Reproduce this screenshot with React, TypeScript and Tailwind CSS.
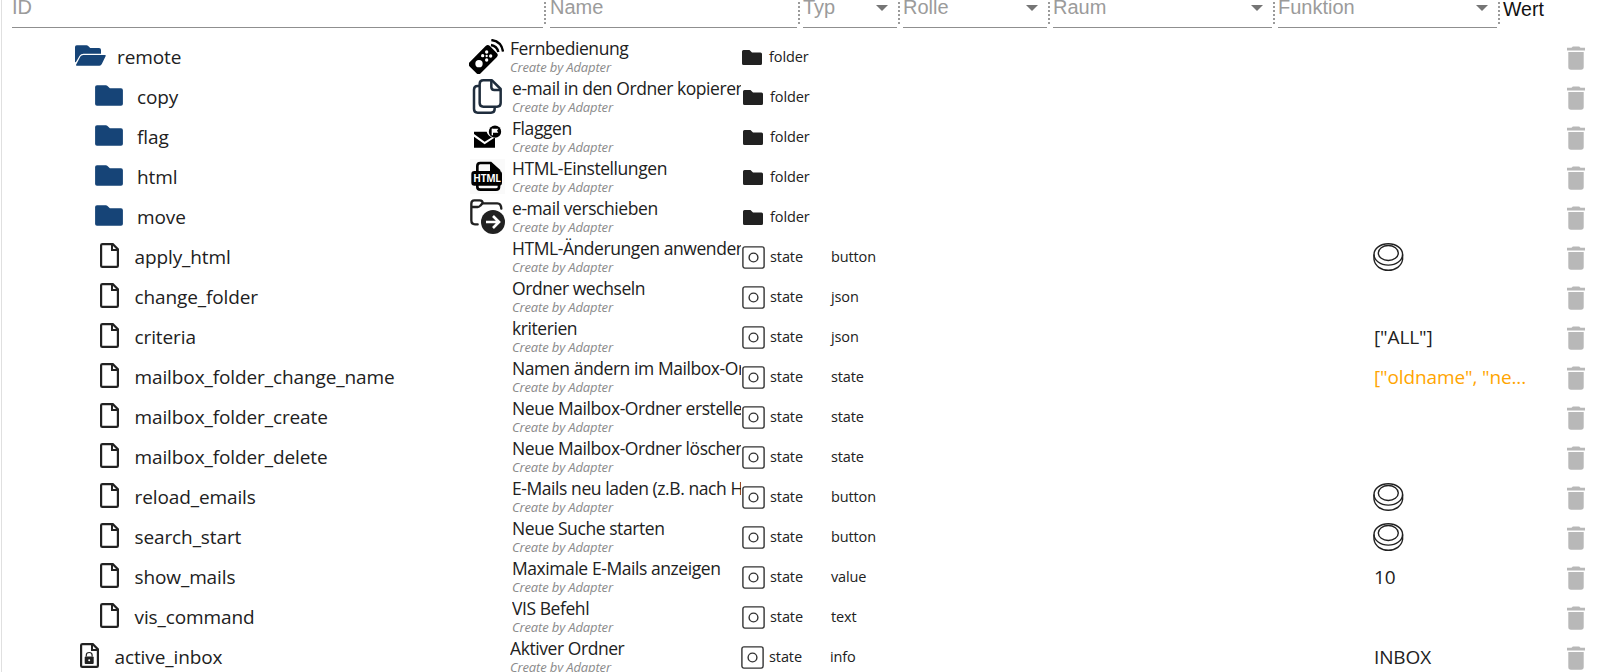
import React from "react";

type Kind = "folder" | "state";
type NameIcon = "remote" | "copy" | "flag" | "html" | "move";

interface Item {
  id: string;
  level: 0 | 1;
  kind: Kind;
  name: string;
  icon?: NameIcon;
  role?: string;
  value?: string;
  pending?: boolean;
  locked?: boolean;
}

const items: Item[] = [
  { id: "remote", level: 0, kind: "folder", name: "Fernbedienung", icon: "remote" },
  { id: "copy", level: 1, kind: "folder", name: "e-mail in den Ordner kopieren", icon: "copy" },
  { id: "flag", level: 1, kind: "folder", name: "Flaggen", icon: "flag" },
  { id: "html", level: 1, kind: "folder", name: "HTML-Einstellungen", icon: "html" },
  { id: "move", level: 1, kind: "folder", name: "e-mail verschieben", icon: "move" },
  { id: "apply_html", level: 1, kind: "state", name: "HTML-Änderungen anwenden", role: "button" },
  { id: "change_folder", level: 1, kind: "state", name: "Ordner wechseln", role: "json" },
  { id: "criteria", level: 1, kind: "state", name: "kriterien", role: "json", value: '["ALL"]' },
  { id: "mailbox_folder_change_name", level: 1, kind: "state", name: "Namen ändern im Mailbox-Or", role: "state", value: '["oldname", "ne...', pending: true },
  { id: "mailbox_folder_create", level: 1, kind: "state", name: "Neue Mailbox-Ordner erstellen", role: "state" },
  { id: "mailbox_folder_delete", level: 1, kind: "state", name: "Neue Mailbox-Ordner löschen", role: "state" },
  { id: "reload_emails", level: 1, kind: "state", name: "E-Mails neu laden (z.B. nach H", role: "button" },
  { id: "search_start", level: 1, kind: "state", name: "Neue Suche starten", role: "button" },
  { id: "show_mails", level: 1, kind: "state", name: "Maximale E-Mails anzeigen", role: "value", value: "10" },
  { id: "vis_command", level: 1, kind: "state", name: "VIS Befehl", role: "text" },
  { id: "active_inbox", level: 0, kind: "state", name: "Aktiver Ordner", role: "info", value: "INBOX", locked: true },
];

function OpenFolder() {
  return (
    <svg className="h-[21px] w-[31px] shrink-0" viewBox="0 0 31 21" fill="#164477">
      <path d="M0 17V2Q0 .3 1.7 .3H11.500Q12.500 .3 13.200 1L15.200 3.100H24Q26 3.100 26 5V8.800H8.500Q5.800 8.800 4.600 10.700L.8 17.300Z" />
      <path d="M8.300 10H30Q31.200 10 30.700 11L26.800 19Q26 20.700 24.500 20.700H1.800Q.6 20.700 1.200 19.600L5.400 11.600Q6.300 10 8.300 10Z" />
    </svg>
  );
}

function ClosedFolder() {
  return (
    <svg className="h-[21px] w-7 shrink-0" viewBox="0 0 28 21" fill="#164477">
      <path d="M2 .2H10.800Q11.800 .2 12.500 .9L14.900 3.300H26Q27.900 3.300 27.900 5.200V19Q27.900 20.800 26 20.800H2Q.1 20.800 .1 19V2Q.1 .2 2 .2Z" />
    </svg>
  );
}

function FileIcon({ locked }: { locked?: boolean }) {
  return (
    <svg className="h-[25px] w-[19px] shrink-0" viewBox="0 0 19 25" fill="none" stroke="#212121" strokeWidth="2.200">
      <path d="M2.500 1.100H12.800L17.900 6.200V22.700Q17.900 23.900 16.700 23.900H2.300Q1.100 23.900 1.100 22.700V2.300Q1.100 1.100 2.500 1.100Z" />
      <path d="M12 1V7H18" strokeWidth="2" />
      {locked && (
        <>
          <path d="M6.300 13.500V12Q6.300 9.500 9.200 9.500Q12.100 9.500 12.100 12V13.500" strokeWidth="1.200" />
          <rect x="4.700" y="13.500" width="9" height="7.500" rx="1" fill="#212121" stroke="none" />
          <circle cx="9.200" cy="17.200" r="1" fill="#fff" stroke="none" />
        </>
      )}
    </svg>
  );
}

function TypeIcon({ kind }: { kind: Kind }) {
  if (kind === "folder") {
    return (
      <svg className="ml-px mt-px h-[15px] w-5 shrink-0" viewBox="0 0 20 15" fill="#212121">
        <path d="M1.500 0H7.500L10 2.500H18.500Q20 2.500 20 4V13.500Q20 15 18.500 15H1.500Q0 15 0 13.500V1.500Q0 0 1.500 0Z" />
      </svg>
    );
  }
  return (
    <svg className="h-[23px] w-[23px] shrink-0" viewBox="0 0 23 23" fill="none" stroke="#333">
      <rect x=".9" y=".9" width="21.200" height="21.200" rx="2" strokeWidth="1.400" />
      <circle cx="11.500" cy="11.500" r="4.400" strokeWidth="1.400" />
    </svg>
  );
}

function NameGlyph({ icon }: { icon: NameIcon }) {
  if (icon === "remote") {
    return (
      <svg className="h-[35px] w-[35px]" viewBox="0 0 105 105">
        <rect x="19" y="19" width="47" height="86" rx="9" transform="rotate(45 42.500 62)" />
        <circle cx="30" cy="74" r="11" fill="#fff" />
        <g fill="#fff">
          <circle cx="53" cy="39" r="5" />
          <circle cx="41" cy="50" r="5" />
          <circle cx="53" cy="51" r="3.500" />
          <circle cx="65" cy="51" r="5" />
          <circle cx="53" cy="63" r="5" />
        </g>
        <g fill="none" stroke="#000" strokeWidth="7">
          <path d="M67 3Q98 7 102 38" />
          <path d="M66 18Q84 21 88 39" />
        </g>
      </svg>
    );
  }
  if (icon === "copy") {
    return (
      <svg className="h-[35px] w-[35px]" viewBox="0 0 105 105" fill="none" stroke="#1f2d3d" strokeWidth="7.500" strokeLinejoin="round">
        <path d="M40 4H66L92 30V72Q92 83 81 83H40Q29 83 29 72V15Q29 4 40 4Z" />
        <path d="M64 5V24Q64 33 73 33H91" />
        <path d="M29 21H23Q12 21 12 32V90Q12 101 23 101H63Q74 101 74 90V83" />
      </svg>
    );
  }
  if (icon === "flag") {
    return (
      <svg className="h-[35px] w-[35px]" viewBox="0 0 105 105">
        <path d="M12 38H50Q54 51 66 55L44 68L12 45Z" />
        <path d="M12 53L44 76L72 57H75V86H12Z" />
        <circle cx="75" cy="38" r="18.500" />
        <path d="M67 29V49" stroke="#fff" strokeWidth="4" />
        <path d="M67 29H85L81 35L85 41H67Z" fill="#fff" />
      </svg>
    );
  }
  if (icon === "html") {
    return (
      <span className="relative block h-[35px] w-[35px] bg-[#fafafa]">
        <svg className="h-[35px] w-[35px]" viewBox="0 0 105 105">
          <path d="M22 36V21Q22 12 31 12H62L87 35V42" fill="none" stroke="#000" strokeWidth="8" />
          <path d="M60 10L89 36H60Z" />
          <path d="M22 78V84Q22 92 31 92H78Q87 92 87 84V78" fill="none" stroke="#000" strokeWidth="8" />
          <rect x="4" y="36" width="92" height="44" rx="9" />
        </svg>
        <span className="absolute left-[2px] top-[13px] w-[30px] text-center font-['Open_Sans',sans-serif] text-[10px] font-bold leading-[13px] tracking-[-0.300px] text-white">
          HTML
        </span>
      </span>
    );
  }
  return (
    <svg className="h-[35px] w-[35px]" viewBox="0 0 105 105" fill="none" stroke="#212121" strokeWidth="7" strokeLinecap="round">
      <path d="M23 76H15Q4 76 4 64V14Q4 4 13 4H29Q38 4 38 12L31 20Q28 24 23 24H5" />
      <path d="M39 13H82Q93 13 94 29" />
      <circle cx="69" cy="69" r="36" fill="#212121" stroke="none" />
      <path d="M48 69H86M69 51L87 69L69 87" stroke="#fff" strokeWidth="8" strokeLinecap="butt" />
    </svg>
  );
}

function PushButton() {
  return (
    <svg className="-ml-px mt-[-1px] h-7 w-[31px]" viewBox="0 0 31 28" fill="none" stroke="#212121" strokeWidth="1.400">
      <ellipse cx="15.300" cy="11.400" rx="14.300" ry="10.700" />
      <ellipse cx="15.300" cy="10" rx="10" ry="7.500" />
      <path d="M1 11.500V16.500C2 23 8 27.300 15.300 27.300S28.600 23 29.600 16.500V11.500" />
    </svg>
  );
}

function TrashIcon() {
  return (
    <svg className="h-6 w-[18px]" viewBox="0 0 18 24" fill="#b8b8b8">
      <path d="M0 1.800H4.500L5.800 .5H12.200L13.500 1.800H18V4.500H0Z" />
      <path d="M1.300 6H16.700V21Q16.700 23.700 14 23.700H4Q1.300 23.700 1.300 21Z" />
    </svg>
  );
}

function Header() {
  const label = "h-[28px] border-b border-[#8f8f8f] flex justify-between";
  const text = "mt-[-4px] text-[20px] leading-[23px] text-[#9b9b9b]";
  const arrow = (
    <svg className="mr-[9px] mt-[5px] h-[6px] w-3" viewBox="0 0 12 6" fill="#757575">
      <path d="M0 0H12L6 6Z" />
    </svg>
  );
  const divider = "mt-[2px] h-[22px] w-0 border-l-2 border-dotted border-[#9a9a9a]";
  return (
    <div className="flex h-[37px] font-['Liberation_Sans',Arial,sans-serif]">
      <div className={`${label} ml-[10px] w-[531px]`}><span className={text}>ID</span></div>
      <div className={`${divider} ml-[1px] mr-[4px]`} />
      <div className={`${label} w-[247px]`}><span className={text}>Name</span></div>
      <div className={`${divider} ml-[1px] mr-[3px]`} />
      <div className={`${label} w-[94px]`}><span className={text}>Typ</span>{arrow}</div>
      <div className={`${divider} ml-[1px] mr-[3px]`} />
      <div className={`${label} w-[144px]`}><span className={text}>Rolle</span>{arrow}</div>
      <div className={`${divider} ml-[1px] mr-[3px]`} />
      <div className={`${label} w-[219px]`}><span className={text}>Raum</span>{arrow}</div>
      <div className={`${divider} ml-[1px] mr-[3px]`} />
      <div className={`${label} w-[219px]`}><span className={text}>Funktion</span>{arrow}</div>
      <div className={`${divider} ml-[1px] mr-[3px]`} />
      <span className="mt-[-2px] text-[19.500px] leading-[23px] text-[#111]">Wert</span>
    </div>
  );
}

function Row({ item }: { item: Item }) {
  const nested = item.level === 1;
  const isFolder = item.kind === "folder";
  let idPad = "pl-[73px]";
  let idGap = "w-[42px]";
  if (isFolder && nested) {
    idPad = "pl-[93px]";
  } else if (!isFolder) {
    idPad = nested ? "pl-[98px]" : "pl-[78px]";
    idGap = "w-[34.500px]";
  }
  return (
    <div className="flex h-10 text-[#212121]">
      <div className={`flex w-[467px] shrink-0 items-start ${idPad}`}>
        <div className={`${idGap} shrink-0 ${isFolder ? "pt-2" : "pt-[6px]"}`}>
          {isFolder ? (nested ? <ClosedFolder /> : <OpenFolder />) : <FileIcon locked={item.locked} />}
        </div>
        <span className="text-[19px] leading-[40px] tracking-[-0.110px]">{item.id}</span>
      </div>
      <div className={`flex w-[273px] shrink-0 ${nested ? "pl-px" : ""}`}>
        <div className={`${nested ? "w-[42px]" : "w-[41px]"} shrink-0 pt-[2px]`}>{item.icon && <NameGlyph icon={item.icon} />}</div>
        <div className="w-[229px] overflow-hidden whitespace-nowrap">
          <div className="h-[23px] text-[17.500px] leading-[22px] tracking-[-0.430px]">{item.name}</div>
          <div className="h-[17px] text-[13px] italic leading-[15px] tracking-[-0.130px] text-[#8a8a8a]">Create by Adapter</div>
        </div>
      </div>
      <div className={`flex w-[89px] shrink-0 items-center ${nested ? "" : "-ml-px mr-px"}`}>
        <div className="w-[28px]"><TypeIcon kind={item.kind} /></div>
        <span className="text-[14.500px] tracking-[-0.100px]">{item.kind}</span>
      </div>
      <div className={`flex w-[543px] shrink-0 items-center text-[14.500px] tracking-[-0.130px] ${nested ? "" : "-ml-px mr-px"}`}>{item.role}</div>
      <div className={`flex w-[193px] shrink-0 items-center text-[19px] tracking-[-0.130px] ${item.pending ? "text-[#ffa500]" : ""}`}>
        {item.role === "button" ? <PushButton /> : item.value}
      </div>
      <div className="flex items-center pt-px"><TrashIcon /></div>
    </div>
  );
}

export default function App() {
  return (
    <div className="flex h-[672px] w-[1600px] overflow-hidden bg-white pl-px font-['Open_Sans','Noto_Sans',sans-serif]">
      <div className="w-full border-l border-[#e0e0e0]">
        <Header />
        {items.map((item) => (
          <Row key={item.id} item={item} />
        ))}
      </div>
    </div>
  );
}
